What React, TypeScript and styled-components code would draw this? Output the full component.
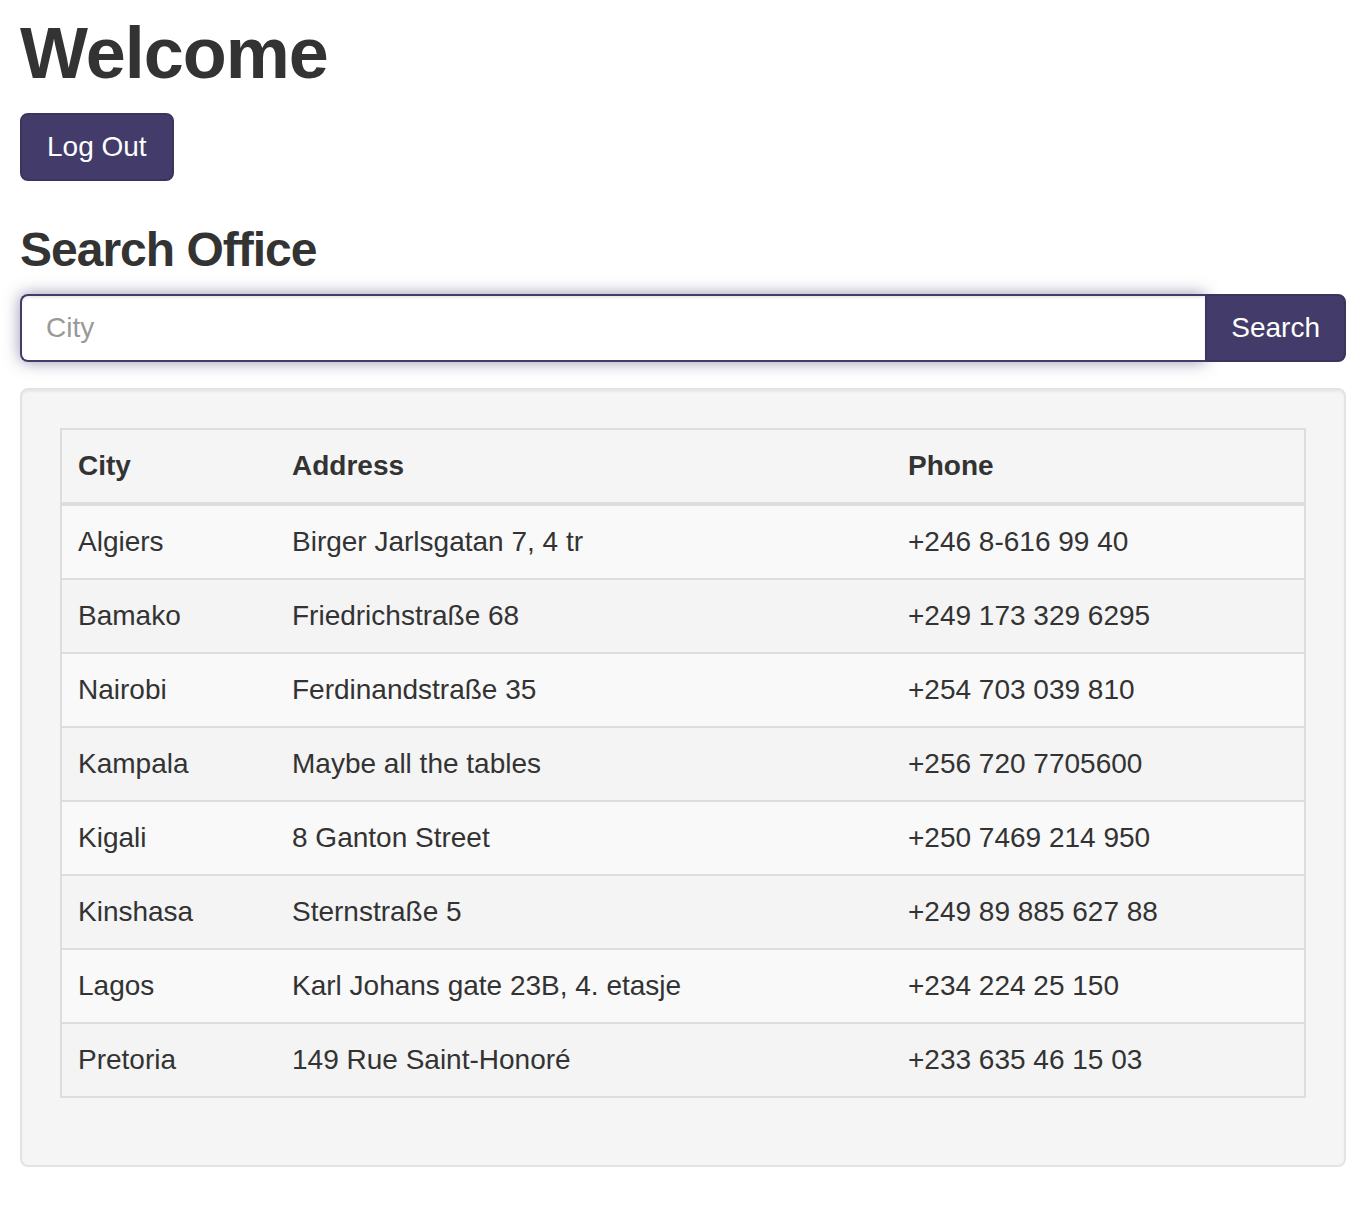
import React from "react";
import styled, { createGlobalStyle } from "styled-components";

const GlobalStyle = createGlobalStyle`
  html, body {
    margin: 0;
    padding: 0;
    background: #ffffff;
  }
  body {
    font-family: "Liberation Sans", Arial, Helvetica, sans-serif;
    font-size: 28px;
    line-height: 40px;
    color: #333333;
  }
  * { box-sizing: border-box; }
`;

const Page = styled.div`
  padding: 14px 12px 40px 20px;
  display: flex;
  flex-direction: column;
  align-items: stretch;
`;

const Title = styled.h1`
  margin: 0;
  font-size: 72px;
  line-height: 79px;
  font-weight: 700;
  letter-spacing: -1px;
  color: #333333;
`;

const PrimaryButton = styled.button<{ $attached?: boolean }>`
  font-family: inherit;
  font-size: 28px;
  line-height: 40px;
  color: #ffffff;
  background: #433c6a;
  border: 2px solid #3a345e;
  border-radius: ${(p) => (p.$attached ? "0 8px 8px 0" : "8px")};
  padding: 12px ${(p) => (p.$attached ? "24px" : "25px")};
  cursor: pointer;
  flex: none;
`;

const ButtonRow = styled.div`
  margin-top: 20px;
  display: flex;
`;

const SubTitle = styled.h3`
  margin: 42px 0 0 0;
  font-size: 48px;
  line-height: 53px;
  font-weight: 700;
  letter-spacing: -1px;
  color: #333333;
`;

const InputGroup = styled.div`
  margin-top: 18px;
  display: flex;
  align-items: stretch;
`;

const CityInput = styled.input`
  flex: 1;
  min-width: 0;
  height: 68px;
  font-family: inherit;
  font-size: 28px;
  color: #555555;
  padding: 12px 24px;
  border: 2px solid #433c6a;
  border-right: none;
  border-radius: 8px 0 0 8px;
  outline: none;
  background: #ffffff;
  box-shadow: inset 0 2px 2px rgba(0, 0, 0, 0.075),
    0 0 16px rgba(67, 60, 106, 0.55);
  &::placeholder {
    color: #999999;
  }
`;

const Well = styled.div`
  margin-top: 26px;
  background: #f5f5f5;
  border: 2px solid #e3e3e3;
  border-radius: 8px;
  padding: 38px 38px 67px 38px;
  box-shadow: inset 0 2px 2px rgba(0, 0, 0, 0.05);
`;

const Table = styled.table`
  width: 100%;
  table-layout: fixed;
  border-collapse: separate;
  border-spacing: 0;
  border: 2px solid #dddddd;
`;

const HeadCell = styled.th<{ $width?: number }>`
  ${(p) => (p.$width ? `width: ${p.$width}px;` : "")}
  text-align: left;
  font-weight: 700;
  padding: 16px;
  line-height: 40px;
  border-bottom: 4px solid #dddddd;
`;

const Row = styled.tr<{ $odd: boolean }>`
  background: ${(p) => (p.$odd ? "#f9f9f9" : "#f4f4f4")};
  &:first-child > td {
    border-top: none;
  }
`;

const Cell = styled.td`
  padding: 16px;
  line-height: 40px;
  white-space: nowrap;
  border-top: 2px solid #dddddd;
`;

const offices = [
  { city: "Algiers", address: "Birger Jarlsgatan 7, 4 tr", phone: "+246 8-616 99 40" },
  { city: "Bamako", address: "Friedrichstraße 68", phone: "+249 173 329 6295" },
  { city: "Nairobi", address: "Ferdinandstraße 35", phone: "+254 703 039 810" },
  { city: "Kampala", address: "Maybe all the tables", phone: "+256 720 7705600" },
  { city: "Kigali", address: "8 Ganton Street", phone: "+250 7469 214 950" },
  { city: "Kinshasa", address: "Sternstraße 5", phone: "+249 89 885 627 88" },
  { city: "Lagos", address: "Karl Johans gate 23B, 4. etasje", phone: "+234 224 25 150" },
  { city: "Pretoria", address: "149 Rue Saint-Honoré", phone: "+233 635 46 15 03" },
];

export default function App() {
  return (
    <>
      <GlobalStyle />
      <Page>
        <Title>Welcome</Title>
        <ButtonRow>
          <PrimaryButton>Log Out</PrimaryButton>
        </ButtonRow>
        <SubTitle>Search Office</SubTitle>
        <InputGroup>
          <CityInput placeholder="City" />
          <PrimaryButton $attached>Search</PrimaryButton>
        </InputGroup>
        <Well>
          <Table>
            <thead>
              <tr>
                <HeadCell $width={214}>City</HeadCell>
                <HeadCell $width={616}>Address</HeadCell>
                <HeadCell>Phone</HeadCell>
              </tr>
            </thead>
            <tbody>
              {offices.map((o, i) => (
                <Row key={o.city} $odd={i % 2 === 0}>
                  <Cell>{o.city}</Cell>
                  <Cell>{o.address}</Cell>
                  <Cell>{o.phone}</Cell>
                </Row>
              ))}
            </tbody>
          </Table>
        </Well>
      </Page>
    </>
  );
}
